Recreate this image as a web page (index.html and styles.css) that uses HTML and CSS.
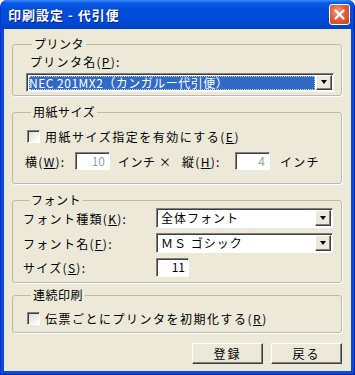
FILE: index.html
```html
<!DOCTYPE html>
<html lang="ja">
<head>
    <meta charset="UTF-8">
    <title>印刷設定 - 代引便</title>
    <link rel="stylesheet" href="styles.css">
</head>
<body>
    <div class="window">
        <div class="titlebar">
            <span class="title">印刷設定 - 代引便</span>
            <span class="close">
                <svg width="13" height="13" viewBox="0 0 13 13"><path d="M2.5 2.5 L10.5 10.5 M10.5 2.5 L2.5 10.5" stroke="#fff" stroke-width="2.2" stroke-linecap="round"/></svg>
            </span>
        </div>
        <div class="client">
            <fieldset class="group printer">
                <legend>プリンタ</legend>
                <div class="field-label">プリンタ名(<u>P</u>):</div>
                <div class="combo wide">
                    <span class="value selected"><span class="printer-name">NEC 201MX2<span class="kana">（カンガルー代引便）</span></span></span>
                    <span class="drop"><i class="arrow"></i></span>
                </div>
            </fieldset>

            <fieldset class="group paper">
                <legend>用紙サイズ</legend>
                <label class="check"><span class="box"></span>用紙サイズ指定を有効にする(<u>E</u>)</label>
                <div class="size-row">
                    <span class="lbl-w">横(<u>W</u>):</span>
                    <span class="num disabled">10</span>
                    <span class="unit">インチ</span>
                    <span class="times">×</span>
                    <span class="lbl-h">縦(<u>H</u>):</span>
                    <span class="num disabled">4</span>
                    <span class="unit last">インチ</span>
                </div>
            </fieldset>

            <fieldset class="group font">
                <legend>フォント</legend>
                <div class="font-grid">
                    <span class="row-label">フォント種類(<u>K</u>):</span>
                    <div class="combo"><span class="value">全体フォント</span><span class="drop"><i class="arrow"></i></span></div>
                    <span class="row-label">フォント名(<u>F</u>):</span>
                    <div class="combo"><span class="value">ＭＳ ゴシック</span><span class="drop"><i class="arrow"></i></span></div>
                    <span class="row-label">サイズ(<u>S</u>):</span>
                    <div><span class="num size">11</span></div>
                </div>
            </fieldset>

            <fieldset class="group serial">
                <legend>連続印刷</legend>
                <label class="check"><span class="box"></span>伝票ごとにプリンタを初期化する(<u>R</u>)</label>
            </fieldset>

            <div class="buttons">
                <button class="btn">登録</button>
                <button class="btn">戻る</button>
            </div>
        </div>
    </div>
</body>
</html>
```

FILE: styles.css
```css
* { box-sizing: border-box; }
body { margin: 0; background: #fff; font-family: "Noto Sans CJK JP", "Noto Sans", sans-serif; font-size: 12px; color: #000; }
u { text-decoration: underline; text-underline-offset: 1px; }

.window { width: 355px; height: 375px; display: flex; flex-direction: column; background: #0A4AD8; border-radius: 7px 7px 0 0; border-left: 1px solid #0831D9; border-right: 1px solid #0022A8; border-bottom: 1px solid #0022A8; }
.titlebar { height: 29px; flex: none; display: flex; align-items: center; justify-content: space-between; padding: 0 4px 0 7px; border-radius: 7px 7px 0 0; background: linear-gradient(#3A8CFA 0, #0A5AE8 3px, #024ED9 9px, #004ADB 22px, #0042C4 29px); }
.title { color: #fff; font-weight: bold; font-size: 13px; letter-spacing: 1px; text-shadow: 1px 1px 0 #0A1E8C; }
.close { width: 21px; height: 21px; display: flex; align-items: center; justify-content: center; border: 1px solid #fff; border-radius: 3px; background: radial-gradient(circle at 40% 35%, #F0A088 0, #E06040 45%, #C8401E 100%); }

.client { flex: 1; margin: 0 3px 3px; background: #ECE9D8; padding-top: 9px; display: flex; flex-direction: column; }

.group { margin: 0 9px 0 8px; padding: 0; min-width: 0; border: 1px solid #BDBAAB; border-radius: 3px; box-shadow: 1px 1px 0 #fff; }
.group legend { margin-left: 6px; padding: 0 2px; line-height: 12px; letter-spacing: 0.5px; }

.printer { padding: 6px 7px 3px 13px; }
.field-label { margin-left: 4px; line-height: 12px; letter-spacing: 1.3px; }

.combo { height: 19px; display: flex; background: #fff; border: 1px solid; border-color: #808080 #fff #fff #808080; box-shadow: inset 1px 1px 0 #404040; }
.combo .value { flex: 1; line-height: 15px; padding: 1px 0 0 4px; letter-spacing: 1px; white-space: nowrap; }
.combo .value.selected { margin: 2px 1px 1px 2px; padding: 0; background: #316AC5; color: #fff; outline: 1px dotted #C8D0E0; outline-offset: -1px; line-height: 14px; }
.printer .combo { margin-top: 5px; }
.printer-name { letter-spacing: 0.5px; }
.printer-name .kana { letter-spacing: 0.5px; }
.drop { width: 16px; flex: none; margin: 1px 1px 1px 0; display: flex; align-items: center; justify-content: center; background: #ECE9D8; border: 1px solid; border-color: #fff #404040 #404040 #fff; box-shadow: inset -1px -1px 0 #808080; }
.arrow { width: 0; height: 0; border-left: 3.5px solid transparent; border-right: 3.5px solid transparent; border-top: 4px solid #000; margin: 0 1px 1px 0; }

.paper { margin-top: 10px; padding: 11px 7px 13px 12px; }
.check { display: flex; align-items: center; height: 14px; margin-left: 2px; letter-spacing: 1.5px; }
.check .box { width: 13px; height: 13px; flex: none; margin-right: 5px; background: linear-gradient(135deg, #DCDAD0, #fff); border: 1px solid; border-color: #808080 #fff #fff #808080; box-shadow: inset 1px 1px 0 #404040; }
.size-row { display: flex; align-items: center; margin-top: 9px; height: 18px; letter-spacing: 1.3px; }
.lbl-w { width: 50px; }
.num { display: inline-block; width: 35px; height: 18px; padding-right: 4px; text-align: right; line-height: 16px; background: #fff; border: 1px solid; border-color: #808080 #fff #fff #808080; box-shadow: inset 1px 1px 0 #404040; letter-spacing: 0; }
.num.disabled { color: #A0A0A0; }
.unit { width: 49px; padding-left: 8px; letter-spacing: 0.5px; }
.unit.last { width: auto; padding-left: 10px; letter-spacing: 1.3px; }
.times { width: 23px; }
.lbl-h { width: 53px; }

.font { margin-top: 10px; padding: 2px 8px 5px 10px; }
.font-grid { display: grid; grid-template-columns: 133px 1fr; row-gap: 5px; align-items: center; }
.font-grid .combo { height: 20px; }
.row-label { letter-spacing: 1.3px; }
.num.size { width: 33px; height: 19px; color: #000; padding-right: 3px; }

.serial { margin-top: 6px; padding: 10px 7px 7px 12px; }

.buttons { display: flex; justify-content: flex-end; gap: 8px; padding: 10px 9px 0 0; }
.btn { width: 71px; height: 21px; font: inherit; letter-spacing: 2px; padding: 0; background: #ECE9D8; border: 1px solid; border-color: #fff #404040 #404040 #fff; box-shadow: inset -1px -1px 0 #808080; }
```
